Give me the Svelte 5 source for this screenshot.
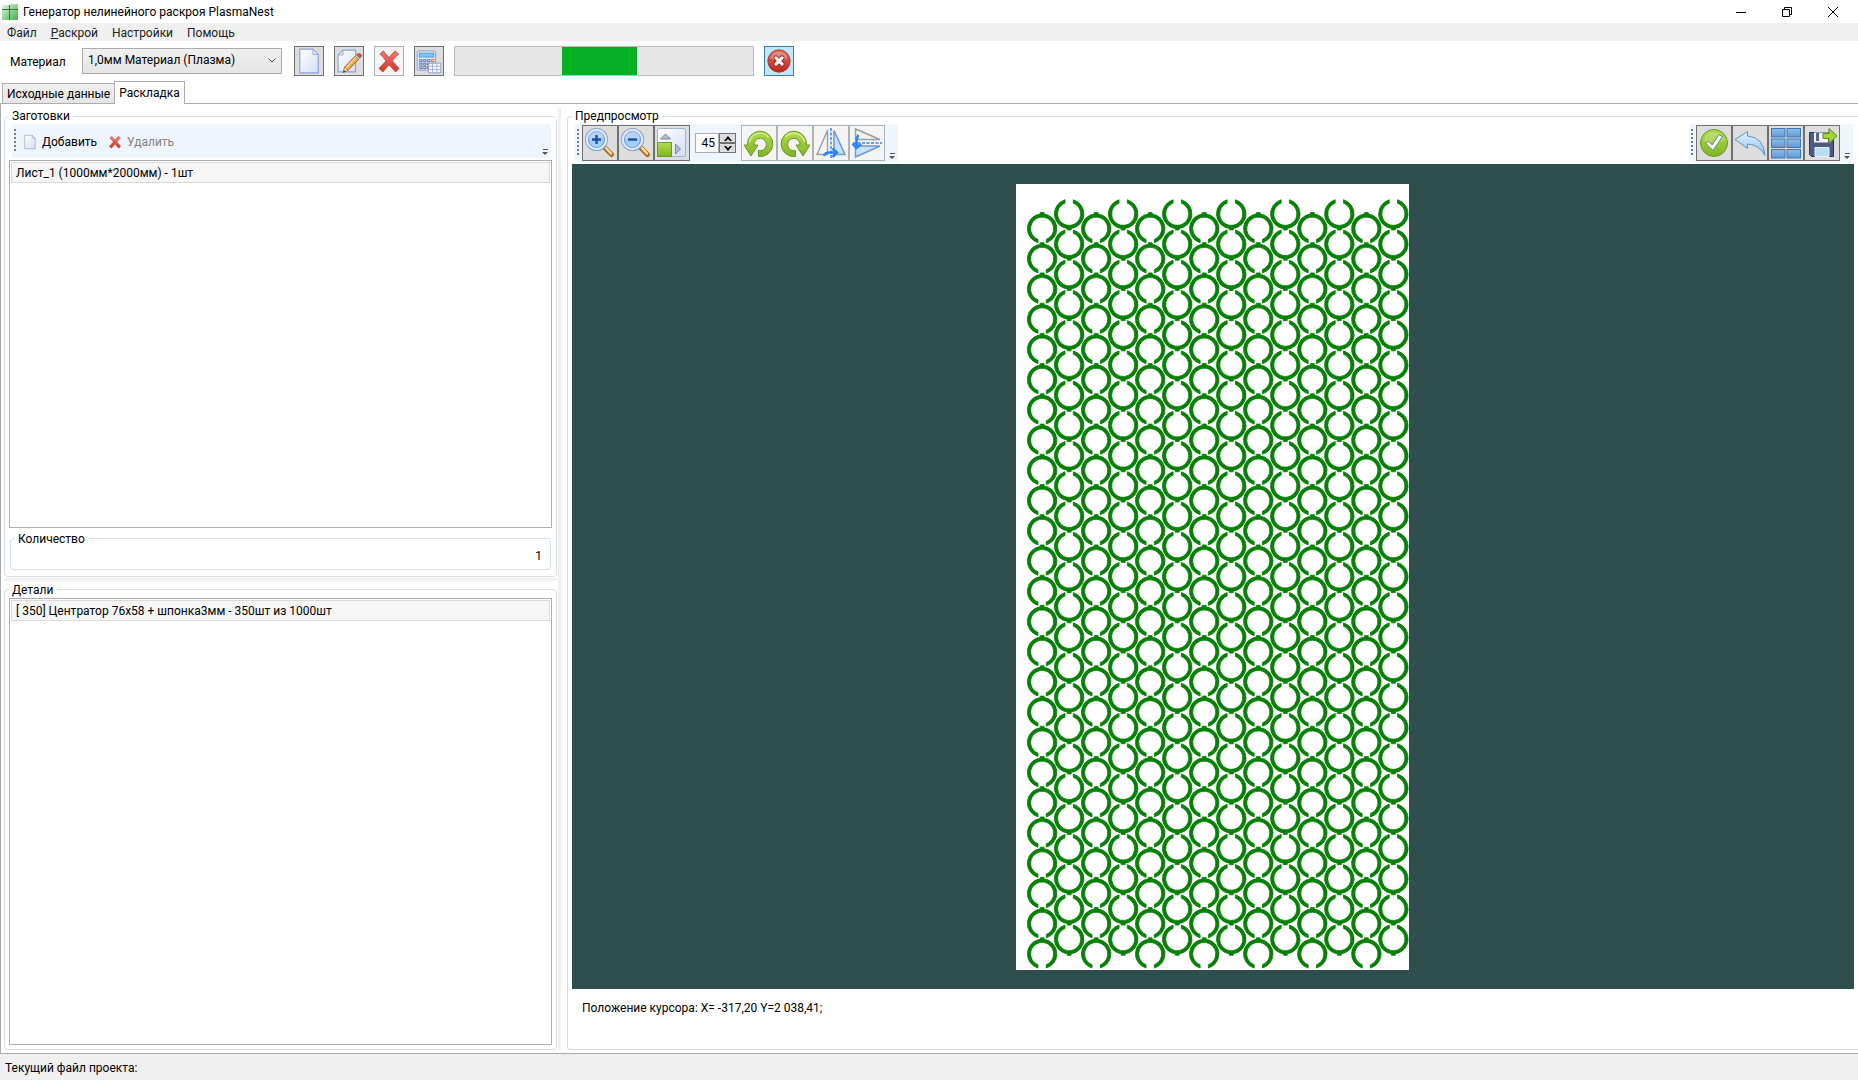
<script>
  const menu = ['Файл', 'Раскрой', 'Настройки', 'Помощь']
  const materials = ['1,0мм Материал (Плазма)']

  let tab = $state('Раскладка')
  let quantity = $state('1')
  let angle = $state(45)

  // sheet is measured in millimetres
  const sheet = { width: 1000, height: 2000 }
  const columns = 14
  const perColumn = 25

  const ring =
    'M-10.5 36A37.5 37.5 0 0 1 -5 -37.2V-41H5V-37.2A37.5 37.5 0 0 1 10.5 36V27.3A29.2 29.2 0 1 0 -10.5 27.3Z'

  const parts = Array.from({ length: columns * perColumn }, (_, i) => {
    const col = Math.floor(i / perColumn)
    const row = i % perColumn
    const flipped = col % 2 === 1
    return {
      x: 66.5 + col * 68.75,
      y: (flipped ? 76 : 113.5) + row * 76.9,
      rotate: flipped ? 180 : 0,
    }
  })

  const previewTools = [
    { icon: zoomIn, label: 'Увеличить' },
    { icon: zoomOut, label: 'Уменьшить' },
    { icon: fit, label: 'Вписать' },
  ]
  const partTools = [
    { icon: rotateLeft, label: 'Повернуть влево' },
    { icon: rotateRight, label: 'Повернуть вправо' },
    { icon: mirrorX, label: 'Отразить по горизонтали' },
    { icon: mirrorY, label: 'Отразить по вертикали' },
  ]
  const resultTools = [
    { icon: apply, label: 'Применить' },
    { icon: undo, label: 'Отменить' },
    { icon: grid, label: 'Таблица' },
    { icon: save, label: 'Сохранить' },
  ]
</script>

<svelte:head>
  <title>Генератор нелинейного раскроя PlasmaNest</title>
</svelte:head>

{#snippet page()}
  <path d="M5.5 2.5H20.5L26.5 8.5V29.5H5.5Z" fill="url(#paper)" stroke="#8fa3cf" stroke-width="1.3" />
  <path d="M20.5 2.5V8.5H26.5Z" fill="#dfe7f8" stroke="#8fa3cf" stroke-linejoin="round" />
{/snippet}

{#snippet pencil()}
  <path d="M9 3.5H23.5V28.5H3.5V9Z" fill="url(#paper)" stroke="#8fa3cf" stroke-width="1.3" />
  <path d="M9 3.5V9H3.5Z" fill="#dfe7f8" stroke="#8fa3cf" stroke-linejoin="round" />
  <path d="M11 23L23 10.5L27 14L15 26.5L9.5 29Z" fill="#f3a83c" stroke="#8a5a2c" />
  <path d="M13 23.5L24 12" stroke="#ffd98c" stroke-width="1.8" />
  <path d="M11 23L15 26.5L9.5 29Z" fill="#f6dfb8" stroke="#8a5a2c" stroke-width=".6" />
  <path d="M9.5 29L10.3 26.5L12 28Z" fill="#333" />
  <path d="M23 10.5L24.5 8.8L28.5 12.5L27 14Z" fill="#c9ced8" stroke="#7d7f88" stroke-width=".6" />
  <path d="M24.5 8.8Q27 6.5 29.5 8.3T29.5 11.5L28.5 12.5Z" fill="#d9553f" stroke="#96463b" stroke-width=".8" />
{/snippet}

{#snippet cross()}
  <path
    d="M5.5 8L9.5 4.5Q13 8.5 16 12Q19 8 23 4.5L27 8Q22.5 12 20 16Q23.5 20 27.5 24.5L23.5 28.5Q19 23.5 16 20.5Q13 24 9 28.5L4.5 24.5Q9 19.5 12.5 16Q10 12 5.5 8Z"
    fill="url(#red)"
    stroke="#c9524a"
    stroke-linejoin="round"
  />
{/snippet}

{#snippet calculator()}
  <rect x="2.5" y="4.5" width="21" height="22" rx="1.5" fill="#dbe4f5" stroke="#8298c8" />
  <rect x="5" y="7" width="16.5" height="4.5" fill="#7cc4f2" stroke="#4a8cc8" stroke-width=".8" />
  {#each [14.5, 18.5, 22.5] as y}
    {#each [5.5, 10, 14.5, 19] as x}
      <rect
        {x}
        {y}
        width="2.5"
        height="2.2"
        fill="#fff"
        stroke={x === 19 && y === 14.5 ? '#d8701c' : '#5669a4'}
      />
    {/each}
  {/each}
  <path d="M15.5 18.5H29.5V29.5H15.5Z" fill="#fff" stroke="#8193c8" />
  <path d="M20 18.5V29.5M25 18.5V29.5M15.5 22H29.5M15.5 25.8H29.5" stroke="#9dabd8" />
{/snippet}

{#snippet stop()}
  <circle cx="16" cy="16" r="12.8" fill="url(#ball)" stroke="#a33a32" />
  <path d="M6 13a10.5 10.5 0 0 1 20 0Q16 17 6 13Z" fill="#fff" opacity=".25" />
  <path d="M12.5 12.5L19.5 19.5M19.5 12.5L12.5 19.5" stroke="#8d2018" stroke-width="5.6" stroke-linecap="round" />
  <path d="M12.5 12.5L19.5 19.5M19.5 12.5L12.5 19.5" stroke="#fff" stroke-width="3.6" stroke-linecap="round" />
{/snippet}

{#snippet lens()}
  <path d="M20.5 20.5L27.5 27.5" stroke="#b06a24" stroke-width="5" stroke-linecap="round" />
  <path d="M22 21L27 26.5" stroke="#ffd9a0" stroke-width="2.5" stroke-linecap="round" />
  <circle cx="12.5" cy="12.5" r="9.5" fill="none" stroke="#7e97c8" stroke-width="4" />
  <circle cx="12.5" cy="12.5" r="9.5" fill="url(#glass)" stroke="#dce8f8" stroke-width="2.4" />
  <circle cx="12.5" cy="12.5" r="8" stroke="#5d86c8" stroke-width=".8" />
  <path d="M5 12a7.5 7.5 0 0 1 15 -1Q12 15 5 12Z" fill="#fff" opacity=".3" />
{/snippet}

{#snippet zoomIn()}
  {@render lens()}
  <path d="M8 12.5H17M12.5 8V17" stroke="#1f4da0" stroke-width="2.4" />
{/snippet}

{#snippet zoomOut()}
  {@render lens()}
  <path d="M8 12.5H17" stroke="#1f4da0" stroke-width="2.4" />
{/snippet}

{#snippet fit()}
  <rect x="1.5" y="1.5" width="28" height="28" rx="1.5" fill="url(#paper)" stroke="#9fb3dc" />
  <rect x="1.5" y="15.5" width="14" height="14" fill="url(#green)" stroke="#679b1c" />
  <path d="M4.5 12L9.5 7L14.5 12Z" fill="#b4bccb" stroke="#7c879c" />
  <path d="M19.5 17L24.5 22L19.5 27Z" fill="#b4bccb" stroke="#7c879c" />
{/snippet}

{#snippet rotateLeft()}
  <path
    d="M1 18H4.5A12.7 12.7 0 1 1 15.5 29.5V23.5A6.2 6.2 0 1 0 11 18H15L8 29Z"
    fill="url(#green)"
    stroke="#6b9a22"
    stroke-linejoin="round"
  />
  <path d="M6.5 15a11 11 0 0 1 19 -5" fill="none" stroke="#d6ef95" stroke-width="1.5" />
{/snippet}

{#snippet rotateRight()}
  <g transform="matrix(-1 0 0 1 32 0)">{@render rotateLeft()}</g>
{/snippet}

{#snippet mirrorX()}
  <path d="M12.5 3.5V27.5H2Z" fill="#f4f4f4" stroke="#9a9fa8" stroke-width="1.5" />
  <path d="M19 3.5V27.5H30Z" fill="#c9e2fb" stroke="#7098cf" stroke-width="1.5" />
  <path d="M16 1V31" stroke="#2f86f5" stroke-width="1.5" stroke-dasharray="3 1.5" />
  <path d="M9 29Q10 25.5 15 25.5H20M17.5 21.5L22 25.5L17.5 30" fill="none" stroke="#2a84fb" stroke-width="2.6" />
{/snippet}

{#snippet mirrorY()}
  <path d="M4.5 2V12.5H29Z" fill="#f4f4f4" stroke="#9a9fa8" stroke-width="1.5" />
  <path d="M4.5 30V19H29Z" fill="#c9e2fb" stroke="#7098cf" stroke-width="1.5" />
  <path d="M2 16H31" stroke="#2f86f5" stroke-width="1.5" stroke-dasharray="3 1.5" />
  <path d="M7.5 8Q5.5 10 5.5 14V19M1.5 16.5L5.5 21L10 17" fill="none" stroke="#2a84fb" stroke-width="2.6" />
{/snippet}

{#snippet apply()}
  <circle cx="16" cy="16" r="13.5" fill="url(#green)" stroke="#6b9a22" />
  <path d="M5 13.5a11.5 11.5 0 0 1 22 0Q16 18 5 13.5Z" fill="#fff" opacity=".2" />
  <path d="M8 16.5L10.5 14L14 18L21 7.5L24.5 9.5L15 23.5Z" fill="#fff" stroke="#5f8a6a" />
{/snippet}

{#snippet undo()}
  <path
    d="M1 12.5L13.5 4.5V9Q29.5 10 31 28.5Q25 17.5 13.5 17V21.5Z"
    fill="url(#sky)"
    stroke="#5d93c9"
    stroke-linejoin="round"
  />
{/snippet}

{#snippet grid()}
  {#each [1.5, 12, 22.5] as y}
    {#each [1.5, 17] as x}
      <rect {x} {y} width="13.5" height="8.5" fill="url(#cell)" stroke="#3f76b8" />
    {/each}
  {/each}
{/snippet}

{#snippet save()}
  <path d="M3.5 5.5H27.5V29.5H5.5L3.5 27.5Z" fill="#4d5a82" stroke="#2c3655" />
  <path d="M8 5.5H22V15.5H8Z" fill="#f2f5fb" />
  <path d="M9 20.5H23V29.5H9Z" fill="#b9dcf5" stroke="#e6f2fb" />
  <rect x="10" y="6" width="3" height="8" fill="#58668d" />
  <path d="M17 6.5H23V1.5L31 9L23 16.5V11.5H17Z" fill="#a4d436" stroke="#5d8d17" />
{/snippet}

{#snippet tool(item, disabled)}
  <button class="tool" type="button" aria-label={item.label} {disabled}>
    <svg viewBox="0 0 32 32" width="32" height="32" fill="none">{@render item.icon()}</svg>
  </button>
{/snippet}

{#snippet overflow()}
  <svg class="overflow" viewBox="0 0 6 6" width="6" height="6" aria-hidden="true">
    <path d="M1 0H6V1H1ZM0 3H6L3 6Z" fill="#555" />
  </svg>
{/snippet}

<svg class="defs" width="0" height="0" aria-hidden="true">
  <defs>
    <linearGradient id="paper" x1="0" y1="0" x2="1" y2="1">
      <stop offset="0" stop-color="#fff" /><stop offset="1" stop-color="#d3def4" />
    </linearGradient>
    <linearGradient id="red" x1="0" y1="0" x2="0" y2="1">
      <stop offset="0" stop-color="#ee7a70" /><stop offset="1" stop-color="#cc3429" />
    </linearGradient>
    <linearGradient id="ball" x1="0" y1="0" x2="0" y2="1">
      <stop offset="0" stop-color="#df7468" /><stop offset="1" stop-color="#c32318" />
    </linearGradient>
    <linearGradient id="green" x1="0" y1="0" x2="0" y2="1">
      <stop offset="0" stop-color="#b2db4e" /><stop offset="1" stop-color="#7fb422" />
    </linearGradient>
    <linearGradient id="glass" x1="0" y1="0" x2="0" y2="1">
      <stop offset="0" stop-color="#8db8ee" /><stop offset="1" stop-color="#a9dbfb" />
    </linearGradient>
    <linearGradient id="sky" x1="0" y1="0" x2="0" y2="1">
      <stop offset="0" stop-color="#e4f3ff" /><stop offset="1" stop-color="#8cc0ec" />
    </linearGradient>
    <linearGradient id="cell" x1="0" y1="0" x2="0" y2="1">
      <stop offset="0" stop-color="#8fbdea" /><stop offset="1" stop-color="#5f98d6" />
    </linearGradient>
    <linearGradient id="logo" x1="0" y1="0" x2="1" y2="1">
      <stop offset="0" stop-color="#e4f8e0" /><stop offset="1" stop-color="#3fae45" />
    </linearGradient>
  </defs>
</svg>

<div class="window">
  <header class="titlebar">
    <svg viewBox="0 0 16 16" width="16" height="16" aria-hidden="true">
      <path d="M0 1H7V16H0ZM8 0H16V16H8Z" fill="url(#logo)" />
      <path d="M0 5.5H7.5M8 5.5H16M7.5 1V16" stroke="#2f7a38" />
    </svg>
    <h1>Генератор нелинейного раскроя PlasmaNest</h1>
    <div class="controls">
      <button type="button" aria-label="Свернуть">
        <svg viewBox="0 0 10 10" width="10" height="10"><path d="M0 5.5H10" stroke="#000" /></svg>
      </button>
      <button type="button" aria-label="Восстановить">
        <svg viewBox="0 0 10 10" width="10" height="10" fill="none" stroke="#000">
          <path d="M.5 2.5H7.5V9.5H.5ZM2.5 2.5V.5H9.5V7.5H7.5" />
        </svg>
      </button>
      <button type="button" aria-label="Закрыть">
        <svg viewBox="0 0 10 10" width="10" height="10"><path d="M0 0L10 10M10 0L0 10" stroke="#000" /></svg>
      </button>
    </div>
  </header>

  <nav class="menu">
    {#each menu as item}
      <button type="button">
        {#if item === 'Раскрой'}<u>Р</u>аскрой{:else}{item}{/if}
      </button>
    {/each}
  </nav>

  <div class="main-tools">
    <label for="material">Материал</label>
    <span class="select">
      <select id="material">
        {#each materials as material}
          <option>{material}</option>
        {/each}
      </select>
      <svg viewBox="0 0 8 5" width="8" height="5" aria-hidden="true">
        <path d="M.5 .5L4 4L7.5 .5" fill="none" stroke="#555" />
      </svg>
    </span>
    {@render tool({ icon: page, label: 'Новый материал' })}
    {@render tool({ icon: pencil, label: 'Изменить материал' })}
    {@render tool({ icon: cross, label: 'Удалить материал' }, true)}
    {@render tool({ icon: calculator, label: 'Рассчитать' })}
    <div class="progress" role="progressbar" aria-label="Раскрой"><span></span></div>
    <button class="tool hot" type="button" aria-label="Остановить">
      <svg viewBox="0 0 32 32" width="28" height="28" fill="none">{@render stop()}</svg>
    </button>
  </div>

  <div class="tabs" role="tablist">
    {#each ['Исходные данные', 'Раскладка'] as name}
      <button
        type="button"
        role="tab"
        aria-selected={tab === name}
        class:active={tab === name}
        onclick={() => (tab = name)}
      >{name}</button>
    {/each}
  </div>

  <main>
    <div class="side">
      <fieldset>
        <legend>Заготовки</legend>
        <div class="toolbar blanks">
          <i class="grip"></i>
          <button type="button">
            <svg viewBox="0 0 32 32" width="16" height="16" fill="none">{@render page()}</svg>
            Добавить
          </button>
          <button type="button" disabled>
            <svg viewBox="0 0 32 32" width="16" height="16" fill="none">{@render cross()}</svg>
            Удалить
          </button>
          {@render overflow()}
        </div>
        <ul>
          <li>Лист_1 (1000мм*2000мм) - 1шт</li>
        </ul>
        <fieldset class="quantity">
          <legend>Количество</legend>
          <input type="text" aria-label="Количество" bind:value={quantity} />
        </fieldset>
      </fieldset>
      <div class="splitter"></div>
      <fieldset>
        <legend>Детали</legend>
        <ul>
          <li>[ 350] Центратор 76x58 + шпонка3мм - 350шт из 1000шт</li>
        </ul>
      </fieldset>
    </div>

    <div class="splitter"></div>

    <fieldset class="preview">
      <legend>Предпросмотр</legend>
      <div class="bars">
        <div class="toolbar">
          <i class="grip"></i>
          {#each previewTools as item}{@render tool(item)}{/each}
          <span class="spinner">
            <input type="text" aria-label="Угол" bind:value={angle} />
            <button type="button" aria-label="Больше" onclick={() => angle++}>
              <svg viewBox="0 0 8 5" width="8" height="5"><path d="M0 5L4 0L8 5H6L4 3L2 5Z" /></svg>
            </button>
            <button type="button" aria-label="Меньше" onclick={() => angle--}>
              <svg viewBox="0 0 8 5" width="8" height="5"><path d="M0 0L4 5L8 0H6L4 2L2 0Z" /></svg>
            </button>
          </span>
          {#each partTools as item}{@render tool(item, true)}{/each}
          {@render overflow()}
        </div>
        <div class="toolbar">
          <i class="grip"></i>
          {#each resultTools as item}{@render tool(item)}{/each}
          {@render overflow()}
        </div>
      </div>
      <div class="canvas">
        <svg viewBox="0 0 {sheet.width} {sheet.height}" role="img" aria-label="Лист_1">
          <rect width={sheet.width} height={sheet.height} fill="#fff" />
          {#each parts as part}
            <path
              d={ring}
              fill="#088008"
              stroke="#088008"
              stroke-width="2"
              transform="translate({part.x} {part.y}) rotate({part.rotate})"
            />
          {/each}
        </svg>
      </div>
      <p>Положение курсора: X= -317,20 Y=2 038,41;</p>
    </fieldset>
  </main>

  <footer>Текущий файл проекта:</footer>
</div>

<style>
  :global(body) {
    margin: 0;
    background: #fff;
  }

  .window,
  button,
  input,
  select {
    color: #000;
    font-family: Roboto, 'Noto Sans', sans-serif;
    font-size: 12px;
    line-height: 16px;
  }

  .window {
    display: flex;
    flex-direction: column;
    height: 100vh;
  }

  .window *,
  .window {
    box-sizing: border-box;
  }

  .defs {
    position: absolute;
  }

  svg {
    display: block;
    flex: none;
  }

  button {
    margin: 0;
    padding: 0;
    border: 0;
    background: none;
  }

  .titlebar {
    display: flex;
    align-items: center;
    gap: 5px;
    height: 23px;
    padding: 0 2px;
  }

  h1 {
    margin: 0;
    padding-top: 1px;
    font-size: 12px;
    font-weight: 400;
  }

  .controls {
    display: flex;
    margin-left: auto;
  }

  .controls button {
    display: grid;
    place-items: center;
    width: 46px;
    height: 20px;
  }

  .menu {
    display: flex;
    gap: 14px;
    height: 18px;
    padding: 1px 7px 0;
    background: #f0f0f0;
  }

  .menu button {
    color: #212121;
  }

  .main-tools {
    display: flex;
    align-items: center;
    gap: 10px;
    height: 40px;
    padding: 0 10px;
  }

  .main-tools label {
    width: 62px;
    padding-top: 2px;
  }

  .select {
    position: relative;
    margin-right: 2px;
  }

  .select svg {
    position: absolute;
    top: 10px;
    right: 6px;
  }

  select {
    display: block;
    width: 200px;
    height: 26px;
    padding: 0 5px 2px;
    border: 1px solid #acacac;
    border-radius: 0;
    background: linear-gradient(#f0f0f0, #e5e5e5);
    appearance: none;
  }

  .tool {
    display: grid;
    place-items: center;
    width: 36px;
    height: 36px;
    border: 1px solid #707070;
    background: #ddd;
  }

  .tool:disabled {
    border-color: #adb2b5;
    background: #f4f4f4;
  }

  .tool.hot {
    border-color: #3c7fb1;
    background: #bee6fd;
  }

  .main-tools .tool {
    width: 30px;
    height: 30px;
  }

  .main-tools .tool svg {
    width: 28px;
    height: 28px;
  }

  .progress {
    width: 300px;
    height: 30px;
    border: 1px solid #bcbcbc;
    background: #e6e6e6;
  }

  .progress span {
    display: block;
    width: 25%;
    height: 100%;
    margin-left: 36%;
    background: #06b025;
  }

  .tabs {
    display: flex;
    align-items: flex-end;
    height: 22px;
    padding: 0 2px;
  }

  .tabs button {
    height: 20px;
    padding: 1px 4px 0;
    border: 1px solid #acacac;
    border-bottom: 0;
    background: linear-gradient(#f0f0f0, #e5e5e5);
  }

  .tabs button.active {
    z-index: 1;
    height: 23px;
    margin: 0 0 -1px -1px;
    padding: 0 4px;
    background: #fff;
  }

  main {
    display: flex;
    flex: 1;
    min-height: 0;
    padding: 4px 0 3px 3px;
    border: 1px solid #acacac;
    border-right: 0;
  }

  fieldset {
    display: flex;
    flex: 1 1 0;
    flex-direction: column;
    min-width: 0;
    min-height: 0;
    margin: 0;
    padding: 0 4px 4px;
    border: 1px solid #d5dfe5;
    border-radius: 4px;
  }

  legend {
    height: 16px;
    margin: 0;
    padding: 0 3px;
  }

  .side {
    display: flex;
    flex-direction: column;
    width: 553px;
  }

  .side > .splitter {
    height: 3px;
    margin: 1px 0;
  }

  .splitter {
    background: #f0f0f0;
  }

  main > .splitter {
    width: 3px;
    margin: 0 6px 0 1px;
  }

  .toolbar {
    display: flex;
    align-items: center;
    border-radius: 3px;
    background: #eef5fd;
  }

  .grip {
    flex: none;
    width: 2px;
    height: 28px;
    margin: 0 3px 0 2px;
    background: repeating-linear-gradient(#777 0 2px, transparent 2px 4px);
  }

  .overflow {
    align-self: flex-end;
    margin: 0 3px 3px 4px;
  }

  .blanks {
    gap: 6px;
    height: 34px;
    margin: 0 1px 2px 3px;
  }

  .blanks .grip {
    height: 24px;
    margin-right: 0;
  }

  .blanks button {
    display: flex;
    align-items: center;
    gap: 4px;
    margin-right: 4px;
    padding-top: 2px;
  }

  .blanks button:disabled {
    color: #838383;
  }

  .blanks .overflow {
    margin-left: auto;
  }

  ul {
    flex: 1;
    margin: 0;
    padding: 1px;
    border: 1px solid #abadb3;
    list-style: none;
  }

  li {
    padding: 2px 4px 1px;
    border: 1px solid #dadada;
    background: #f6f6f6;
  }

  .quantity {
    flex: none;
    margin: 3px 1px 2px;
    padding: 0 6px 4px 4px;
  }

  .quantity input {
    width: 100%;
    height: 18px;
    padding: 0 2px;
    border: 0;
    text-align: right;
  }

  .preview {
    border-right: 0;
    border-radius: 4px 0 0 4px;
  }

  .bars {
    display: flex;
    justify-content: space-between;
    margin: 0 1px 2px 3px;
  }

  .bars .toolbar {
    height: 38px;
  }

  .spinner {
    display: grid;
    grid-template: 10px 10px / 24px 17px;
    margin: 0 5px;
  }

  .spinner input {
    grid-row: span 2;
    min-width: 0;
    padding: 0 3px;
    border: 1px solid #abadb3;
    text-align: right;
  }

  .spinner button {
    display: grid;
    place-items: center;
    border: 1px solid #707070;
    background: #ddd;
  }

  .canvas {
    display: flex;
    flex: 1;
    justify-content: center;
    min-height: 0;
    padding: 20px 1px 19px 0;
    background: #2f4f4f;
  }

  .canvas svg {
    height: 100%;
  }

  p {
    height: 56px;
    margin: 0;
    padding: 11px 10px;
  }

  footer {
    height: 26px;
    padding: 6px 5px;
    background: #f0f0f0;
  }
</style>
